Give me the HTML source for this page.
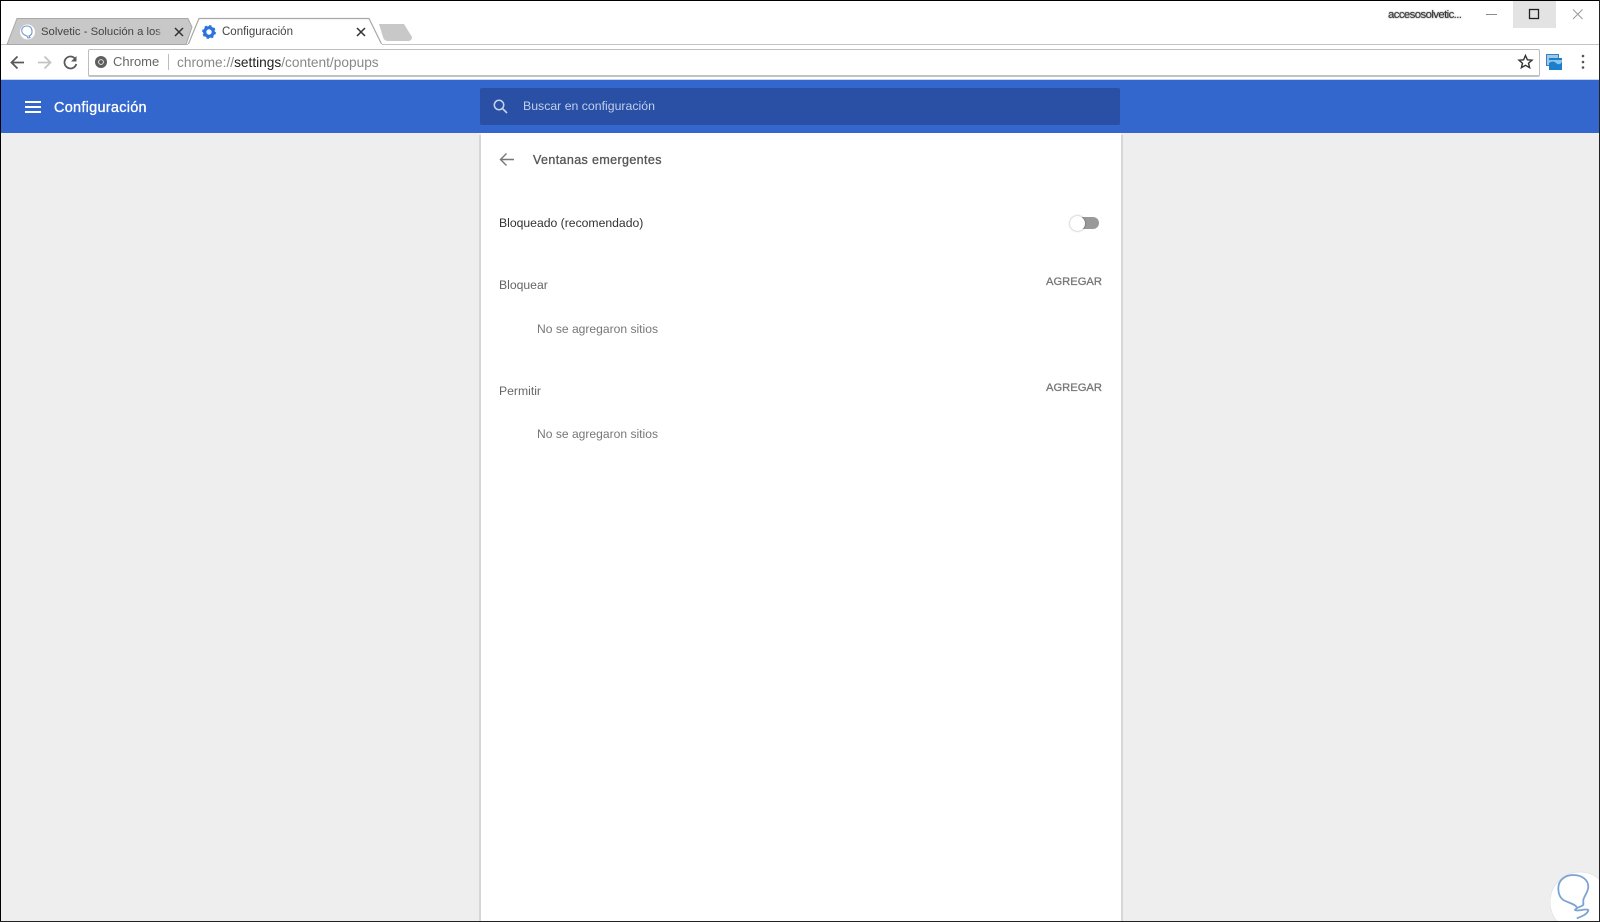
<!DOCTYPE html>
<html><head><meta charset="utf-8"><style>
html,body{margin:0;padding:0;background:#eee}
#p{position:relative;width:1600px;height:922px;overflow:hidden;background:#eee;font-family:"Liberation Sans",sans-serif}
.a{position:absolute}
.t{position:absolute;white-space:nowrap;line-height:16px}
</style></head><body><div id="p">
<div class="a" style="left:0;top:0;width:1600px;height:44px;background:#fff"></div>
<div class="a" style="left:0;top:44px;width:1600px;height:36px;background:#fff"></div>
<div class="a" style="left:0;top:44px;width:1600px;height:1px;background:#c4c4c4"></div>
<div class="a" style="left:0;top:79px;width:1600px;height:1px;background:#c9d6ee"></div>
<svg class="a" style="left:0;top:0" width="430" height="46">
<path d="M7 44.5L17 18.5H188L192 27L186 44.5Z" fill="#c8c8c8" stroke="#a8a8a8"/>
<path d="M188 45L199 18.5H369L382 45" fill="#fff" stroke="#a8a8a8" stroke-width="1.2"/>
<rect x="188" y="44" width="194" height="2" fill="#fff"/>
<path d="M379 24H404L412 37Q412 41 408 41H388Q384 41 383 37Z" fill="#c8c8c8"/>
<circle cx="27.500" cy="32" r="7.500" fill="#fff"/>
<path d="M27 26c-4 0-6 3-5 6s3 3 5 4l1 2 2-.5-1-1.500c3-1 3-3 3-5 0-3-2-5-5-5z" fill="none" stroke="#6d9ad0" stroke-width="1.100"/>
<path d="M175 28l8 8M183 28l-8 8M357 28l8 8M365 28l-8 8" stroke="#333" stroke-width="1.500"/>
<circle cx="209" cy="32" r="4.300" fill="none" stroke="#2a73e0" stroke-width="3.200"/>
<circle cx="209" cy="32" r="6" fill="none" stroke="#2a73e0" stroke-width="1.800" stroke-dasharray="2.400 2.300"/>
</svg>
<div class="t" style="left:41px;top:24px;width:125px;overflow:hidden;font-size:11.300px;color:#444">Solvetic - Solución a los pro</div>
<div class="a" style="left:156px;top:24px;width:10px;height:16px;background:linear-gradient(90deg,rgba(200,200,200,0),#c8c8c8 80%)"></div>
<div class="t" style="left:222px;top:24px;font-size:11.500px;color:#444">Configuración</div>
<div class="t" style="left:1388px;top:7px;font-size:11.400px;letter-spacing:-.6px;color:#333;text-shadow:0 0 1.500px #666">accesosolvetic...</div>
<div class="a" style="left:1513px;top:1px;width:43px;height:27px;background:#e3e3e3"></div>
<svg class="a" style="left:1480px;top:0" width="120" height="30">
<path d="M6 14.500H17" stroke="#8a8a8a"/>
<rect x="49.500" y="9.500" width="9" height="9" fill="none" stroke="#222" stroke-width="1.300"/>
<path d="M93 9.500l9.500 9.500M102.500 9.500L93 19" stroke="#999" stroke-width="1"/>
</svg>
<svg class="a" style="left:0;top:44px" width="90" height="36">
<path d="M24 18.500H12M17.500 12.500L11.500 18.500L17.500 24.500" fill="none" stroke="#5a5a5a" stroke-width="1.800"/>
<path d="M38 18.500H50M44.500 12.500L50.500 18.500L44.500 24.500" fill="none" stroke="#c4c4c4" stroke-width="1.800"/>
<path d="M75 14.500a6 6 0 1 0 1.300 5.500" fill="none" stroke="#5a5a5a" stroke-width="1.800"/>
<path d="M76.500 12v5.500h-5.500z" fill="#5a5a5a"/>
</svg>
<div class="a" style="left:88px;top:49px;width:1450px;height:25px;background:#fff;border:1px solid #bdbdbd;border-bottom:2px solid #c2c2c2;border-radius:2px;box-sizing:content-box"></div>
<svg class="a" style="left:94px;top:55px" width="14" height="14"><circle cx="7" cy="7" r="6" fill="#5f5f5f"/><circle cx="7" cy="7" r="2.800" fill="#fff"/><circle cx="7" cy="7" r="2" fill="#5f5f5f"/></svg>
<div class="t" style="left:113px;top:54px;font-size:13px;color:#666">Chrome</div>
<div class="a" style="left:168px;top:54px;width:1px;height:16px;background:#bdbdbd"></div>
<div class="t" style="left:177px;top:55px;font-size:13.700px;color:#888">chrome://<span style="color:#222">settings</span>/content/popups</div>
<svg class="a" style="left:1516px;top:52px" width="84" height="20">
<path d="M9.500 3.500l1.900 4.300 4.600.4-3.500 3 1.100 4.500-4.100-2.400-4.100 2.400 1.100-4.500-3.500-3 4.600-.4z" fill="none" stroke="#333" stroke-width="1.400"/>
<rect x="30.500" y="2.500" width="12" height="11" fill="#9cc8ea" stroke="#3e7fc0"/>
<rect x="33" y="6" width="13" height="12" fill="#1b7fc9"/>
<path d="M33 11q4-3 7 0t6-1v-2h-13z" fill="#8cc4ec"/>
<circle cx="67" cy="4" r="1.300" fill="#555"/><circle cx="67" cy="10" r="1.300" fill="#555"/><circle cx="67" cy="15.500" r="1.300" fill="#555"/>
</svg>
<div class="a" style="left:0;top:80px;width:1600px;height:53px;background:#3367cd"></div>
<div class="a" style="left:25px;top:101px;width:16px;height:2px;background:#fff"></div>
<div class="a" style="left:25px;top:106px;width:16px;height:2px;background:#fff"></div>
<div class="a" style="left:25px;top:111px;width:16px;height:2px;background:#fff"></div>
<div class="t" style="left:54px;top:100px;font-size:14.500px;letter-spacing:.26px;color:#fff;-webkit-text-stroke:.3px #fff">Configuración</div>
<div class="a" style="left:480px;top:88px;width:640px;height:37px;background:#2a50a5;border-radius:2px"></div>
<svg class="a" style="left:492px;top:98px" width="18" height="18"><circle cx="7" cy="7" r="4.700" fill="none" stroke="#c5d3ee" stroke-width="1.500"/><path d="M10.500 10.500L15 15" stroke="#c5d3ee" stroke-width="1.600"/></svg>
<div class="t" style="left:523px;top:98px;font-size:12.300px;color:#c0cfec">Buscar en configuración</div>
<div class="a" style="left:479px;top:135px;width:644px;height:787px;background:#d6d6d6"></div>
<div class="a" style="left:481px;top:133px;width:640px;height:789px;background:#fff"></div>
<svg class="a" style="left:498px;top:150px" width="20" height="20"><path d="M16 9.500H2.500M8.500 3.500L2.500 9.500L8.500 15.500" fill="none" stroke="#777" stroke-width="1.400"/></svg>
<div class="t" style="left:533px;top:152px;font-size:12.500px;letter-spacing:.38px;color:#555;-webkit-text-stroke:.3px #555">Ventanas emergentes</div>
<div class="t" style="left:499px;top:215px;font-size:12.200px;color:#333">Bloqueado (recomendado)</div>
<div class="a" style="left:1076px;top:217px;width:23px;height:12px;background:#999;border-radius:6px"></div>
<div class="a" style="left:1070px;top:216px;width:15px;height:15px;background:#fff;border-radius:50%;box-shadow:0 0 2px rgba(0,0,0,.4)"></div>
<div class="t" style="left:499px;top:277px;font-size:12.200px;color:#666">Bloquear</div>
<div class="t" style="left:1046px;top:274px;font-size:11.200px;color:#777;-webkit-text-stroke:.3px #777">AGREGAR</div>
<div class="t" style="left:537px;top:321px;font-size:12.100px;color:#777">No se agregaron sitios</div>
<div class="t" style="left:499px;top:383px;font-size:12.200px;color:#666">Permitir</div>
<div class="t" style="left:1046px;top:379.500px;font-size:11.200px;color:#777;-webkit-text-stroke:.3px #777">AGREGAR</div>
<div class="t" style="left:537px;top:426px;font-size:12.100px;color:#777">No se agregaron sitios</div>
<svg class="a" style="left:1550px;top:871px" width="50" height="51">
<circle cx="30" cy="31" r="30" fill="#fff" stroke="#e2e6ec"/>
<path d="M26.700 36.300C25 33 20 32.500 13.300 29C9 26 8.300 21 8.300 17.300C8.300 9 15 4 23.300 4C32 4 38.300 9 38.300 15.700C38.300 21 34 25 33.300 29L33.300 34C31 36 27 36 25 39C28 41 35 37 38.300 39C38 43 31 46 26.700 47.300" fill="none" stroke="#7da3d0" stroke-width="1.800"/>
</svg>
<div class="a" style="left:0;top:0;width:1600px;height:1px;background:#000"></div>
<div class="a" style="left:0;top:0;width:1px;height:922px;background:#000"></div>
<div class="a" style="left:1599px;top:0;width:1px;height:922px;background:#222"></div>
<div class="a" style="left:0;top:921px;width:1600px;height:1px;background:#222"></div>
</div></body></html>
